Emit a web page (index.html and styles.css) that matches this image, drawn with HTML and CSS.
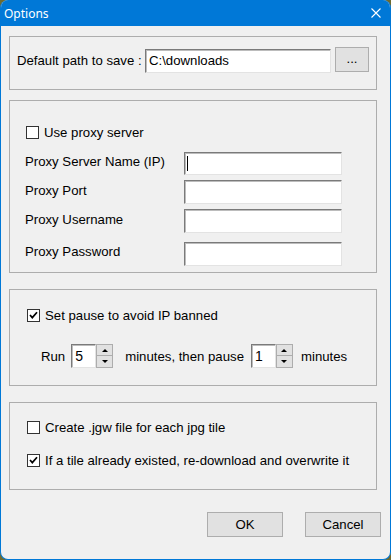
FILE: index.html
```html
<!DOCTYPE html>
<html lang="en">
<head>
<meta charset="utf-8">
<title>Options</title>
<link rel="stylesheet" href="styles.css">
</head>
<body>
<div class="window">
  <div class="titlebar">
    <span class="title">Options</span>
    <svg class="close" width="10" height="10" viewBox="0 0 10 10"><path d="M0.5 0.5 L9.5 9.5 M9.5 0.5 L0.5 9.5" stroke="#fff" stroke-width="1.1" fill="none"/></svg>
  </div>
  <div class="content">
    <div class="group group-path">
      <span class="path-label">Default path to save :</span>
      <div class="field path-field">C:\downloads</div>
      <div class="btn browse">...</div>
    </div>

    <div class="group group-proxy">
      <div class="checkrow"><span class="check"></span><span>Use proxy server</span></div>
      <div class="prow prow-first"><span class="plabel">Proxy Server Name (IP)</span><div class="field pfield"><span class="caret"></span></div></div>
      <div class="prow prow-2"><span class="plabel">Proxy Port</span><div class="field pfield"></div></div>
      <div class="prow prow-3"><span class="plabel">Proxy Username</span><div class="field pfield"></div></div>
      <div class="prow prow-4"><span class="plabel">Proxy Password</span><div class="field pfield"></div></div>
    </div>

    <div class="group group-pause">
      <div class="checkrow"><span class="check checked"><svg width="11" height="11" viewBox="0 0 11 11"><path d="M2 5 L4.3 7.6 L9 2.3" stroke="#000" stroke-width="1.7" fill="none"/></svg></span><span>Set pause to avoid IP banned</span></div>
      <div class="runrow">
        <span class="run-label">Run</span>
        <div class="spinner">
          <div class="field spin-field">5</div>
          <div class="spin-btns">
            <div class="spin-btn"><span class="arrow-up"></span></div>
            <div class="spin-btn"><span class="arrow-down"></span></div>
          </div>
        </div>
        <span class="mid-label">minutes, then pause</span>
        <div class="spinner">
          <div class="field spin-field">1</div>
          <div class="spin-btns">
            <div class="spin-btn"><span class="arrow-up"></span></div>
            <div class="spin-btn"><span class="arrow-down"></span></div>
          </div>
        </div>
        <span class="end-label">minutes</span>
      </div>
    </div>

    <div class="group group-tiles">
      <div class="checkrow"><span class="check"></span><span>Create .jgw file for each jpg tile</span></div>
      <div class="checkrow checkrow-2"><span class="check checked"><svg width="11" height="11" viewBox="0 0 11 11"><path d="M2 5 L4.3 7.6 L9 2.3" stroke="#000" stroke-width="1.7" fill="none"/></svg></span><span>If a tile already existed, re-download and overwrite it</span></div>
    </div>

    <div class="buttons">
      <div class="btn dlg-btn">OK</div>
      <div class="btn dlg-btn">Cancel</div>
    </div>
  </div>
</div>
</body>
</html>
```

FILE: styles.css
```css
html, body {
  margin: 0;
  padding: 0;
  background: #6f6b2e;
}
.window {
  width: 391px;
  height: 560px;
  box-sizing: border-box;
  border: 1px solid #0078d7;
  border-top: 0;
  border-radius: 8px;
  overflow: hidden;
  background: #f0f0f0;
  font-family: "Liberation Sans", Arial, sans-serif;
  font-size: 13.2px;
  color: #000;
}
.titlebar {
  height: 26px;
  background: #0078d7;
  display: flex;
  align-items: center;
  justify-content: space-between;
  padding: 0 10px 0 4px;
  margin: 0 -1px;
}
.title {
  color: #fff;
  font-family: "Noto Sans", "Open Sans", sans-serif;
  font-size: 12px;
  line-height: 16px;
  margin-top: 1px;
}
.close {
  display: block;
}
.content {
  padding: 10px 0 0 8px;
  display: flex;
  flex-direction: column;
}
.group {
  width: 368px;
  box-sizing: border-box;
  border: 1px solid #adadad;
}
.field {
  box-sizing: border-box;
  background: #fff;
  border-top: 1px solid #7a7a7a;
  border-left: 1px solid #7a7a7a;
  border-right: 1px solid #e3e3e3;
  border-bottom: 1px solid #e3e3e3;
  box-shadow: inset 1px 1px 0 #bcbcbc;
}
.btn {
  box-sizing: border-box;
  background: #e1e1e1;
  border: 1px solid #adadad;
  display: flex;
  align-items: center;
  justify-content: center;
}

/* group 1 */
.group-path {
  height: 54px;
  display: flex;
  align-items: flex-start;
  padding: 12px 0 0 7px;
}
.path-label {
  width: 128px;
  line-height: 24px;
}
.path-field {
  width: 186px;
  height: 24px;
  line-height: 21px;
  padding-left: 3px;
}
.browse {
  width: 34px;
  height: 25px;
  margin: -2px 0 0 4px;
  padding-bottom: 3px;
}

/* checkboxes */
.checkrow {
  display: flex;
  align-items: center;
  height: 16px;
  gap: 5px;
}
.check {
  width: 13px;
  height: 13px;
  box-sizing: border-box;
  border: 1px solid #333;
  background: #fff;
  display: flex;
  align-items: center;
  justify-content: center;
}
.check svg { display: block; }

/* group 2 */
.group-proxy {
  height: 173px;
  margin-top: 10px;
  padding: 23px 0 0 15px;
}
.group-proxy .checkrow { margin-left: 1px; }
.prow {
  display: flex;
  align-items: center;
  height: 23px;
}
.prow-first { margin-top: 12px; }
.prow-2 { margin-top: 5px; height: 24px; }
.prow-3 { margin-top: 5px; height: 24px; }
.prow-4 { margin-top: 9px; height: 24px; }
.plabel {
  width: 159px;
  margin-bottom: 4px;
}
.prow-4 .plabel { margin-bottom: 6px; }
.pfield {
  width: 158px;
  height: 100%;
  display: flex;
  align-items: center;
  padding-left: 2px;
}
.caret {
  display: block;
  width: 1px;
  height: 15px;
  background: #000;
}

/* group 3 */
.group-pause {
  height: 97px;
  margin-top: 16px;
  padding: 17px 0 0 17px;
}
.runrow {
  display: flex;
  align-items: center;
  height: 24px;
  margin-top: 21px;
  padding-left: 14px;
}
.run-label { margin-right: 6px; }
.mid-label { margin: 0 7px 0 12px; }
.end-label { margin-left: 8px; }
.spinner {
  display: flex;
  height: 24px;
}
.spin-field {
  width: 25px;
  height: 24px;
  line-height: 22px;
  padding-left: 3px;
  font-size: 14px;
}
.spin-btns {
  width: 17px;
  display: flex;
  flex-direction: column;
}
.spin-btn {
  height: 12px;
  box-sizing: border-box;
  background: #e1e1e1;
  border: 1px solid #adadad;
  display: flex;
  align-items: center;
  justify-content: center;
}
.spin-btn + .spin-btn { border-top: 0; }
.arrow-up {
  width: 0;
  height: 0;
  border-left: 3px solid transparent;
  border-right: 3px solid transparent;
  border-bottom: 3px solid #000;
}
.arrow-down {
  width: 0;
  height: 0;
  border-left: 3px solid transparent;
  border-right: 3px solid transparent;
  border-top: 3px solid #000;
}

/* group 4 */
.group-tiles {
  height: 88px;
  margin-top: 16px;
  padding: 16px 0 0 17px;
}
.checkrow-2 { margin-top: 17px; }

/* buttons */
.buttons {
  display: flex;
  justify-content: flex-end;
  gap: 22px;
  margin-top: 22px;
  padding-right: 9px;
}
.dlg-btn {
  width: 76px;
  height: 25px;
}
```
